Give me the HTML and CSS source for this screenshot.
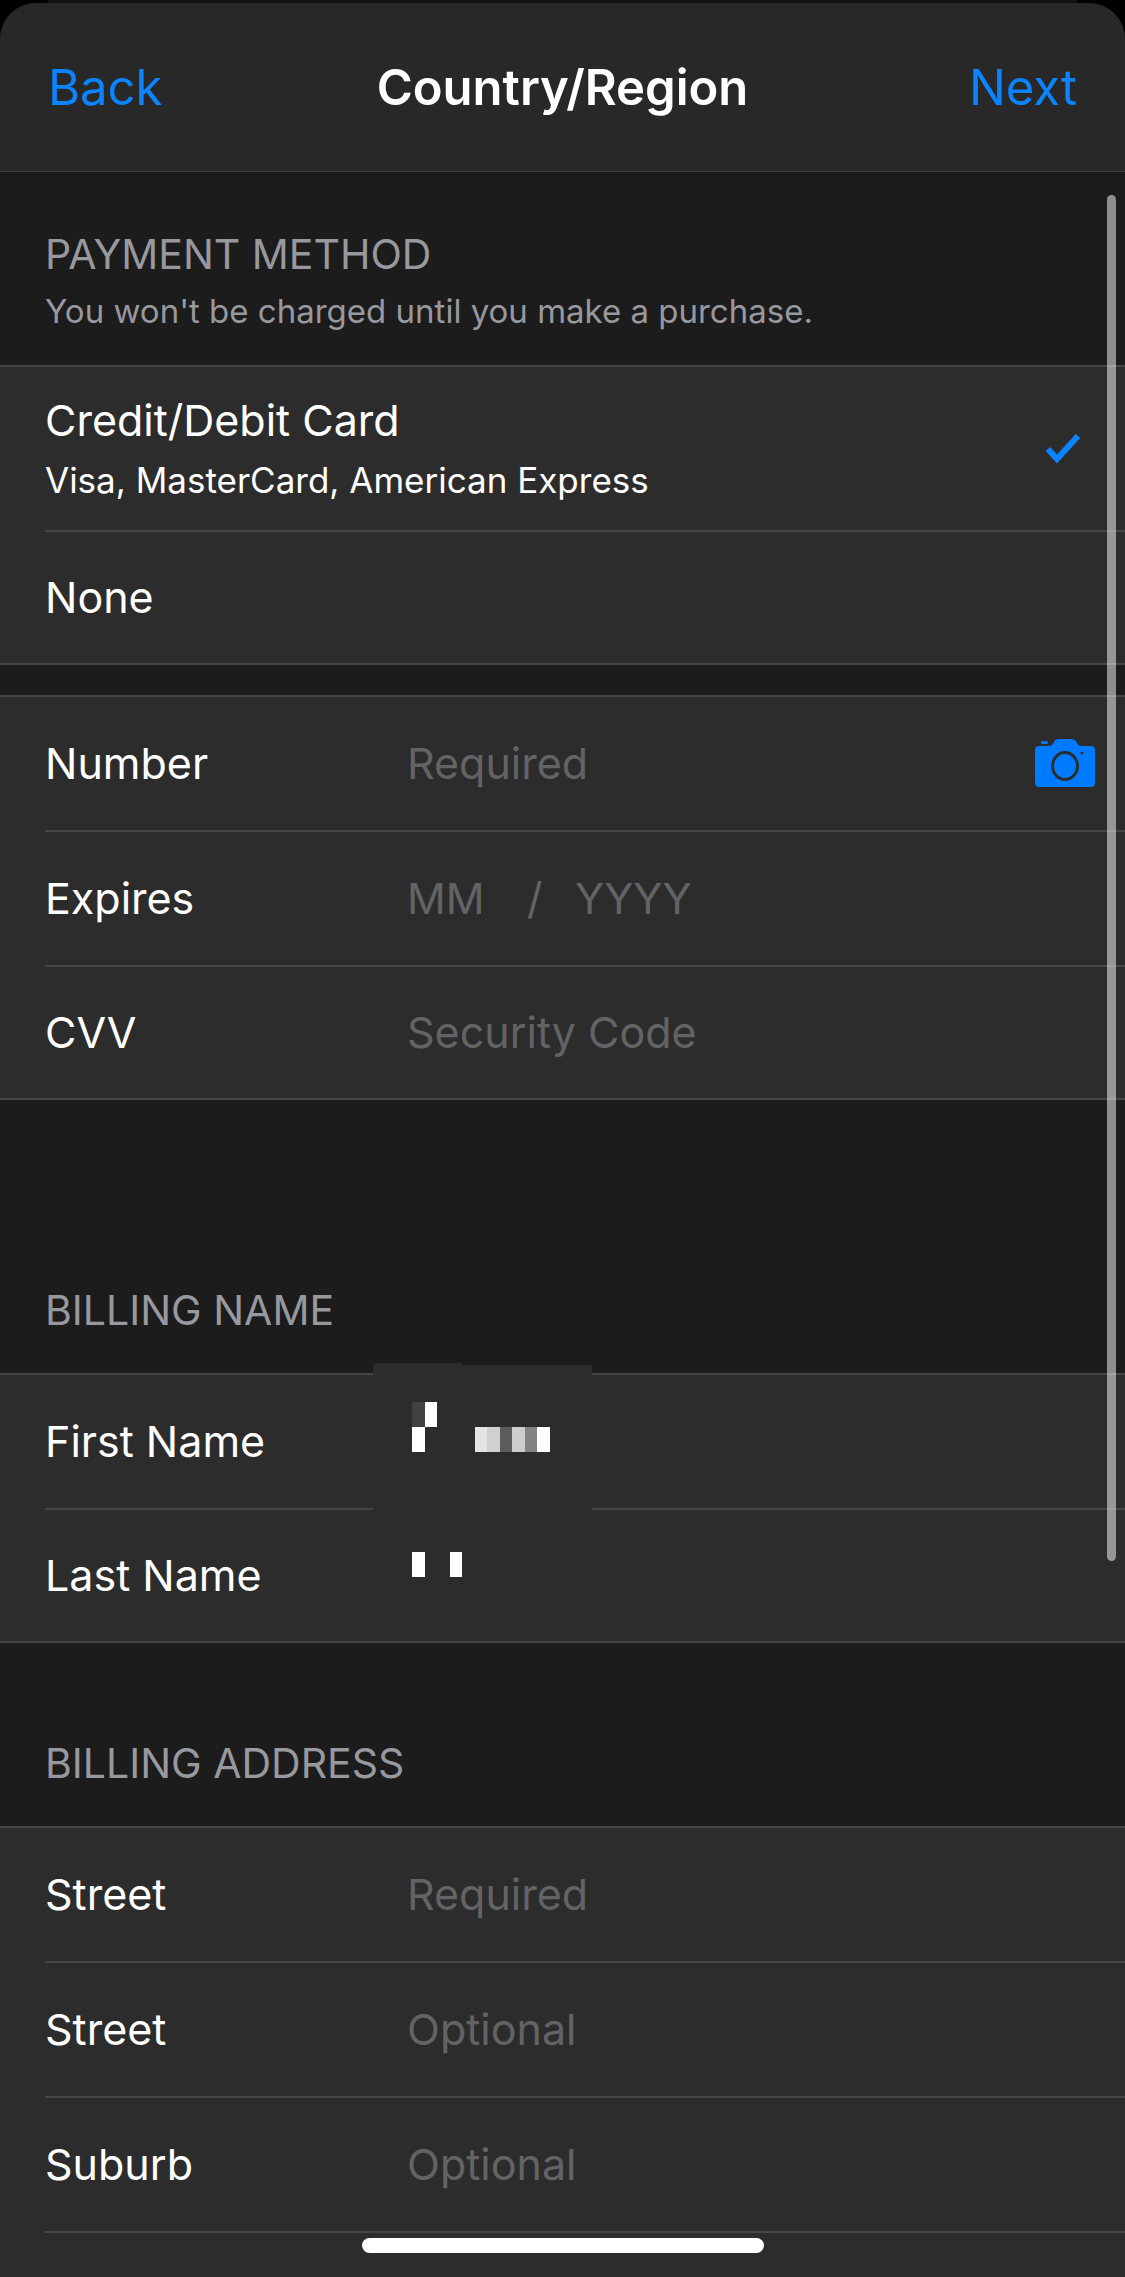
FILE: index.html
```html
<!DOCTYPE html>
<html lang="en">
<head>
  <meta charset="UTF-8" />
  <meta name="viewport" content="width=device-width, initial-scale=1" />
  <title>Country/Region</title>
  <link rel="stylesheet" href="styles.css">
</head>
<body>
  <div class="behind"></div>
  <form class="sheet" autocomplete="off">
    <header>
      <button type="button" class="nav-btn">Back</button>
      <h1>Country/Region</h1>
      <button type="submit" class="nav-btn next">Next</button>
    </header>

    <main>
      <section class="payment">
        <div class="section-head">
          <h2>PAYMENT METHOD</h2>
          <p>You won't be charged until you make a purchase.</p>
        </div>
        <div class="group">
          <label class="row option tall">
            <span class="option-text">
              <span>Credit/Debit Card</span>
              <small>Visa, MasterCard, American Express</small>
            </span>
            <input type="radio" name="method" value="card" checked />
            <svg class="check" viewBox="0 0 34 30" width="34" height="30">
              <path d="M2 15L11 25L32 2" fill="none" stroke="#0a84ff" stroke-width="6" />
            </svg>
          </label>
          <label class="row option">
            <span class="option-text">None</span>
            <input type="radio" name="method" value="none" />
            <svg class="check" viewBox="0 0 34 30" width="34" height="30">
              <path d="M2 15L11 25L32 2" fill="none" stroke="#0a84ff" stroke-width="6" />
            </svg>
          </label>
        </div>
      </section>

      <section class="card">
        <div class="group">
          <div class="row">
            <label for="number">Number</label>
            <input type="text" id="number" placeholder="Required" />
            <button type="button" class="camera" aria-label="Scan card">
              <svg viewBox="0 0 60 48" width="60" height="48">
                <path fill="#007aff" d="M4 7H13C16 7 17.500 6 18.500 4C19.500 1.500 21 0 24 0H36C39 0 41 1.500 42 4C43 6 44.500 7 47 7H56Q60 7 60 11V44Q60 48 56 48H4Q0 48 0 44V11Q0 7 4 7Z" />
                <rect x="6" y="2" width="7" height="3" rx="1" fill="#007aff" />
                <ellipse cx="30" cy="27" rx="12.500" ry="13.500" fill="none" stroke="#2c2c2c" stroke-width="3" />
                <circle cx="47" cy="14" r="1.500" fill="#2c2c2c" />
              </svg>
            </button>
          </div>
          <div class="row">
            <label for="month">Expires</label>
            <input type="text" id="month" class="month" placeholder="MM" />
            <span class="slash">/</span>
            <input type="text" id="year" placeholder="YYYY" aria-label="Expiry year" />
          </div>
          <div class="row">
            <label for="cvv">CVV</label>
            <input type="text" id="cvv" placeholder="Security Code" />
          </div>
        </div>
      </section>

      <section class="name">
        <div class="section-head">
          <h2>BILLING NAME</h2>
        </div>
        <div class="group">
          <div class="row">
            <label for="first">First Name</label>
            <input type="text" id="first" />
          </div>
          <div class="row">
            <label for="last">Last Name</label>
            <input type="text" id="last" />
          </div>
          <!-- pixelated cover over the two name values -->
          <svg class="mosaic" viewBox="0 0 219 230" width="219" height="230" shape-rendering="crispEdges">
            <path fill="#2c2c2c" d="M0 1H2V0H89V2H219V230H0Z" />
            <rect x="39" y="39" width="13" height="25" fill="#414143" />
            <rect x="52" y="39" width="12" height="25" fill="#fff" />
            <rect x="39" y="64" width="13" height="25" fill="#fff" />
            <rect x="102" y="64" width="12" height="25" fill="#e4e4e4" />
            <rect x="114" y="64" width="13" height="25" fill="#d0d0d0" />
            <rect x="127" y="64" width="12" height="25" fill="#5c5c5c" />
            <rect x="139" y="64" width="13" height="25" fill="#cdcdcd" />
            <rect x="152" y="64" width="12" height="25" fill="#828282" />
            <rect x="164" y="64" width="13" height="25" fill="#fff" />
            <rect x="39" y="189" width="13" height="25" fill="#fff" />
            <rect x="77" y="189" width="12" height="25" fill="#fff" />
          </svg>
        </div>
      </section>

      <section class="address">
        <div class="section-head">
          <h2>BILLING ADDRESS</h2>
        </div>
        <div class="group">
          <div class="row">
            <label for="street1">Street</label>
            <input type="text" id="street1" placeholder="Required" />
          </div>
          <div class="row">
            <label for="street2">Street</label>
            <input type="text" id="street2" placeholder="Optional" />
          </div>
          <div class="row">
            <label for="suburb">Suburb</label>
            <input type="text" id="suburb" placeholder="Optional" />
          </div>
          <div class="row cut"></div>
        </div>
      </section>
    </main>
  </form>

  <div class="scrollbar"></div>
  <div class="home-bar"></div>
</body>
</html>
```
FILE: styles.css
```css
:root {
  --bg: #1c1c1c;
  --cell: #2c2c2c;
  --line: #464646;
  --muted: #98989f;
  --hint: #636366;
  --accent: #0a84ff;
}
* { box-sizing: border-box; }
body {
  margin: 0; padding-top: 3px;
  display: flex; flex-direction: column; min-height: 100vh;
  background: #000; color: #fff;
  font-family: Inter, "Liberation Sans", sans-serif; font-size: 43px;
}
h1, h2, p { margin: 0; font-weight: 400; }
button {
  padding: 0; border: none; background: none;
  font: inherit; cursor: pointer;
}
.behind {
  position: absolute; top: 0; left: 48px; right: 48px;
  height: 3px; background: #131313;
}
.sheet {
  flex: 1; display: flex; flex-direction: column;
  background: var(--bg); border-radius: 36px 36px 0 0; overflow: hidden;
}
header {
  display: grid; grid-template-columns: 1fr auto 1fr; align-items: center;
  height: 169px; padding: 0 48px;
  background: #282828; border-bottom: 1px solid #3d3d3d;
}
h1 { font-size: 49px; font-weight: 600; }
.nav-btn {
  justify-self: start; color: var(--accent); font-size: 49px;
}
.nav-btn.next { justify-self: end; }

main { flex: 1; display: flex; flex-direction: column; }
.section-head {
  padding: 95px 45px 38px; color: var(--muted);
}
.payment .section-head { padding-top: 57px; padding-bottom: 34px; }
h2 { font-size: 41px; line-height: 50px; }
.section-head p { margin-top: 12px; font-size: 33px; line-height: 40px; }

.group {
  position: relative; background: var(--cell);
  border-top: 2px solid var(--line); border-bottom: 2px solid var(--line);
}
.row {
  display: flex; align-items: center;
  height: 133px; margin-left: 45px; padding: 0 30px 2px 0;
}
.row + .row { height: 135px; border-top: 2px solid var(--line); }
.row + .row:last-of-type, .row.option + .row.option { height: 133px; }
.row > label { width: 362px; flex: none; }
.row input[type="text"] {
  flex: 1; min-width: 0; padding: 0; border: none; outline: none;
  background: transparent; color: #fff; font: inherit;
}
.row input::placeholder { color: var(--hint); opacity: 1; }
.row input.month { flex: none; width: 120px; }
.slash { width: 48px; color: var(--hint); }

.option { justify-content: space-between; padding-right: 45px; }
.row.tall { height: 163px; padding-bottom: 0; }
.option-text { display: flex; flex-direction: column; gap: 10px; line-height: 52px; }
.option small { font-size: 35px; line-height: 48px; }
.option input { position: absolute; opacity: 0; }
.check { visibility: hidden; }
.option input:checked + .check { visibility: visible; }
.camera svg { display: block; }

.payment { margin-bottom: 30px; }
.card { margin-bottom: 90px; }
.mosaic { position: absolute; top: -12px; left: 373px; }

.address { flex: 1; display: flex; flex-direction: column; }
.address .group { flex: 1; border-bottom: none; }
.address .row.row.cut:last-of-type { height: 2px; padding: 0; }

.scrollbar {
  position: fixed; top: 195px; right: 9px;
  width: 9px; height: 60vh; border-radius: 5px;
  background: rgba(255, 255, 255, .5);
}
.home-bar {
  position: fixed; bottom: 24px; left: 50%;
  width: 402px; height: 15px; margin-left: -201px;
  background: #fff; border-radius: 8px;
}
```
